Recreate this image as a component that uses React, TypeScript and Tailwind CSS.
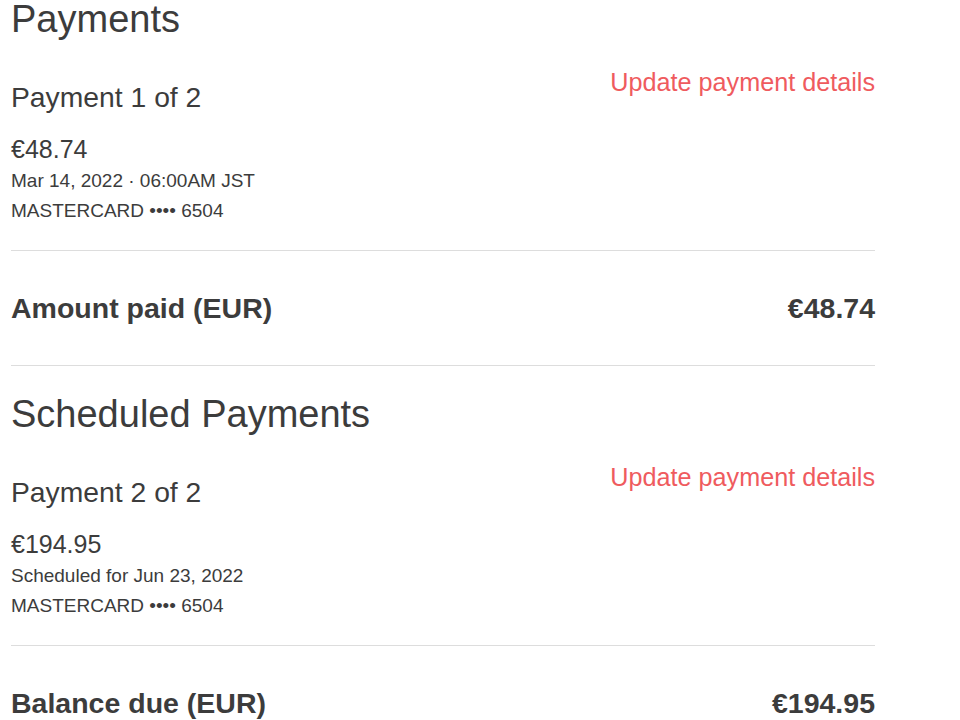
import React from 'react';

type Payment = {
  label: string;
  amount: string;
  detail: string;
  card: string;
};

const PaymentBlock: React.FC<{ p: Payment }> = ({ p }) => (
  <div className="flex justify-between items-start mt-[30px]">
    <div className="flex flex-col">
      <div className="mt-[15px] text-[28.3px] leading-none">{p.label}</div>
      <div className="mt-[26px] text-[25px] leading-none">{p.amount}</div>
      <div className="mt-[9px] text-[19px] leading-none">{p.detail}</div>
      <div className="mt-[11px] text-[19px] leading-none">{p.card}</div>
    </div>
    <a href="#" className="mt-[2px] text-[25.2px] leading-none text-[#ef5b5e]">
      Update payment details
    </a>
  </div>
);

const TotalRow: React.FC<{ label: string; value: string }> = ({ label, value }) => (
  <div className="flex justify-between items-start mt-[43px] text-[28.5px] leading-none font-bold">
    <span>{label}</span>
    <span>{value}</span>
  </div>
);

const App: React.FC = () => {
  return (
    <div className="min-h-screen bg-white text-[#3c3c3c] font-['Liberation_Sans',Arial,sans-serif]">
      <div className="w-[864px] ml-[11px]">
        <h1 className="text-[38px] leading-none">Payments</h1>
        <PaymentBlock
          p={{
            label: 'Payment 1 of 2',
            amount: '€48.74',
            detail: 'Mar 14, 2022 · 06:00AM JST',
            card: 'MASTERCARD •••• 6504',
          }}
        />
        <div className="mt-[30px] border-t border-[#dddddd]" />
        <TotalRow label="Amount paid (EUR)" value="€48.74" />
        <div className="mt-[42px] border-t border-[#dddddd]" />

        <h2 className="mt-[29px] text-[38px] leading-none">Scheduled Payments</h2>
        <PaymentBlock
          p={{
            label: 'Payment 2 of 2',
            amount: '€194.95',
            detail: 'Scheduled for Jun 23, 2022',
            card: 'MASTERCARD •••• 6504',
          }}
        />
        <div className="mt-[30px] border-t border-[#dddddd]" />
        <TotalRow label="Balance due (EUR)" value="€194.95" />
      </div>
    </div>
  );
};

export default App;
